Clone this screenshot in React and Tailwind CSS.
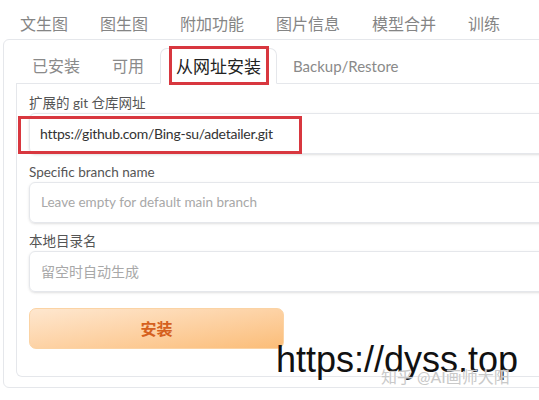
import React from "react";

const cjk = "font-['Lato','Noto_Sans_CJK_SC',sans-serif]";

export default function App() {
  const topTabs = ["文生图", "图生图", "附加功能", "图片信息", "模型合并", "训练"];

  return (
    <div className={`relative w-[539px] h-[400px] overflow-hidden bg-white ${cjk}`}>
      <div className="w-[600px]">

        {/* TOP TABS */}
        <div className="flex h-[39px] items-end pl-[4px] pb-[5px]">
          {topTabs.map((t) => (
            <div key={t} className="px-[16px] text-[16px] leading-[20px] text-[#858585]">
              {t}
            </div>
          ))}
        </div>

        {/* OUTER PANEL */}
        <div className="ml-[3px] border border-[#e5e7eb] rounded-[6px] px-[12px] pt-[8px] pb-[10px]">

          {/* INNER TABS */}
          <div className="flex items-end border-b border-[#e5e7eb] h-[36px]">
            <div className="px-[16px] pb-[7px] text-[16px] leading-[20px] text-[#8a8a8a]">已安装</div>
            <div className="px-[16px] pb-[7px] text-[16px] leading-[20px] text-[#8a8a8a]">可用</div>
            <div className="-mb-px h-[36px] flex items-center px-[15px] pt-[2px] border border-b-white border-[#e5e7eb] rounded-t-[7px] bg-white text-[17px] text-[#222]">
              从网址安装
            </div>
            <div className="px-[16px] pb-[7px] text-[15px] leading-[20px] text-[#8a8a8a]">Backup/Restore</div>
          </div>

          {/* INNER PANEL */}
          <div className="border-x border-b border-[#e5e7eb] rounded-b-[6px] px-[12px] pt-[10px] pb-[27px] flex flex-col gap-[9px]">
            <div>
              <div className="text-[13.5px] leading-[18px] text-[#555] mb-[1px]">扩展的 git 仓库网址</div>
              <div className="h-[41px] flex items-center pl-[10px] border border-[#e5e7eb] rounded-[6px] shadow-sm text-[14px] tracking-[-0.25px] text-[#333]">
                https://github.com/Bing-su/adetailer.git
              </div>
            </div>
            <div>
              <div className="text-[13.5px] leading-[18px] text-[#555] mb-[1px]">Specific branch name</div>
              <div className="h-[41px] flex items-center pl-[11px] border border-[#e5e7eb] rounded-[6px] shadow-sm text-[13.5px] text-[#a8a8a8]">
                Leave empty for default main branch
              </div>
            </div>
            <div>
              <div className="text-[13.5px] leading-[18px] text-[#555] mb-[1px]">本地目录名</div>
              <div className="h-[41px] flex items-center pl-[11px] border border-[#e5e7eb] rounded-[6px] shadow-sm text-[14px] text-[#a8a8a8]">
                留空时自动生成
              </div>
            </div>
            <button className="mt-[7px] w-[255px] h-[41px] rounded-[7px] bg-gradient-to-br from-[#fee7cf] to-[#fbbd78] border border-[#fbd3a4] text-[16px] font-bold text-[#d5601e]">
              安装
            </button>
          </div>
        </div>
      </div>

      {/* ANNOTATION BOXES */}
      <div className="absolute left-[169px] top-[46px] w-[100px] h-[39px] border-[3px] border-[#d8373f]" />
      <div className="absolute left-[18px] top-[116px] w-[284px] h-[38px] border-[3px] border-[#d8373f]" />

      {/* WATERMARKS */}
      <div className="absolute left-[276px] top-[338px] font-['Liberation_Sans',sans-serif] text-[36px] leading-[44px] text-[#111]">
        https://dyss.top
      </div>
      <div className="absolute left-[381px] top-[366px] text-[16px] leading-[22px] text-[#c9c9c9] [text-shadow:0_0_1px_white]">
        知乎 @AI画师大阳
      </div>
    </div>
  );
}
